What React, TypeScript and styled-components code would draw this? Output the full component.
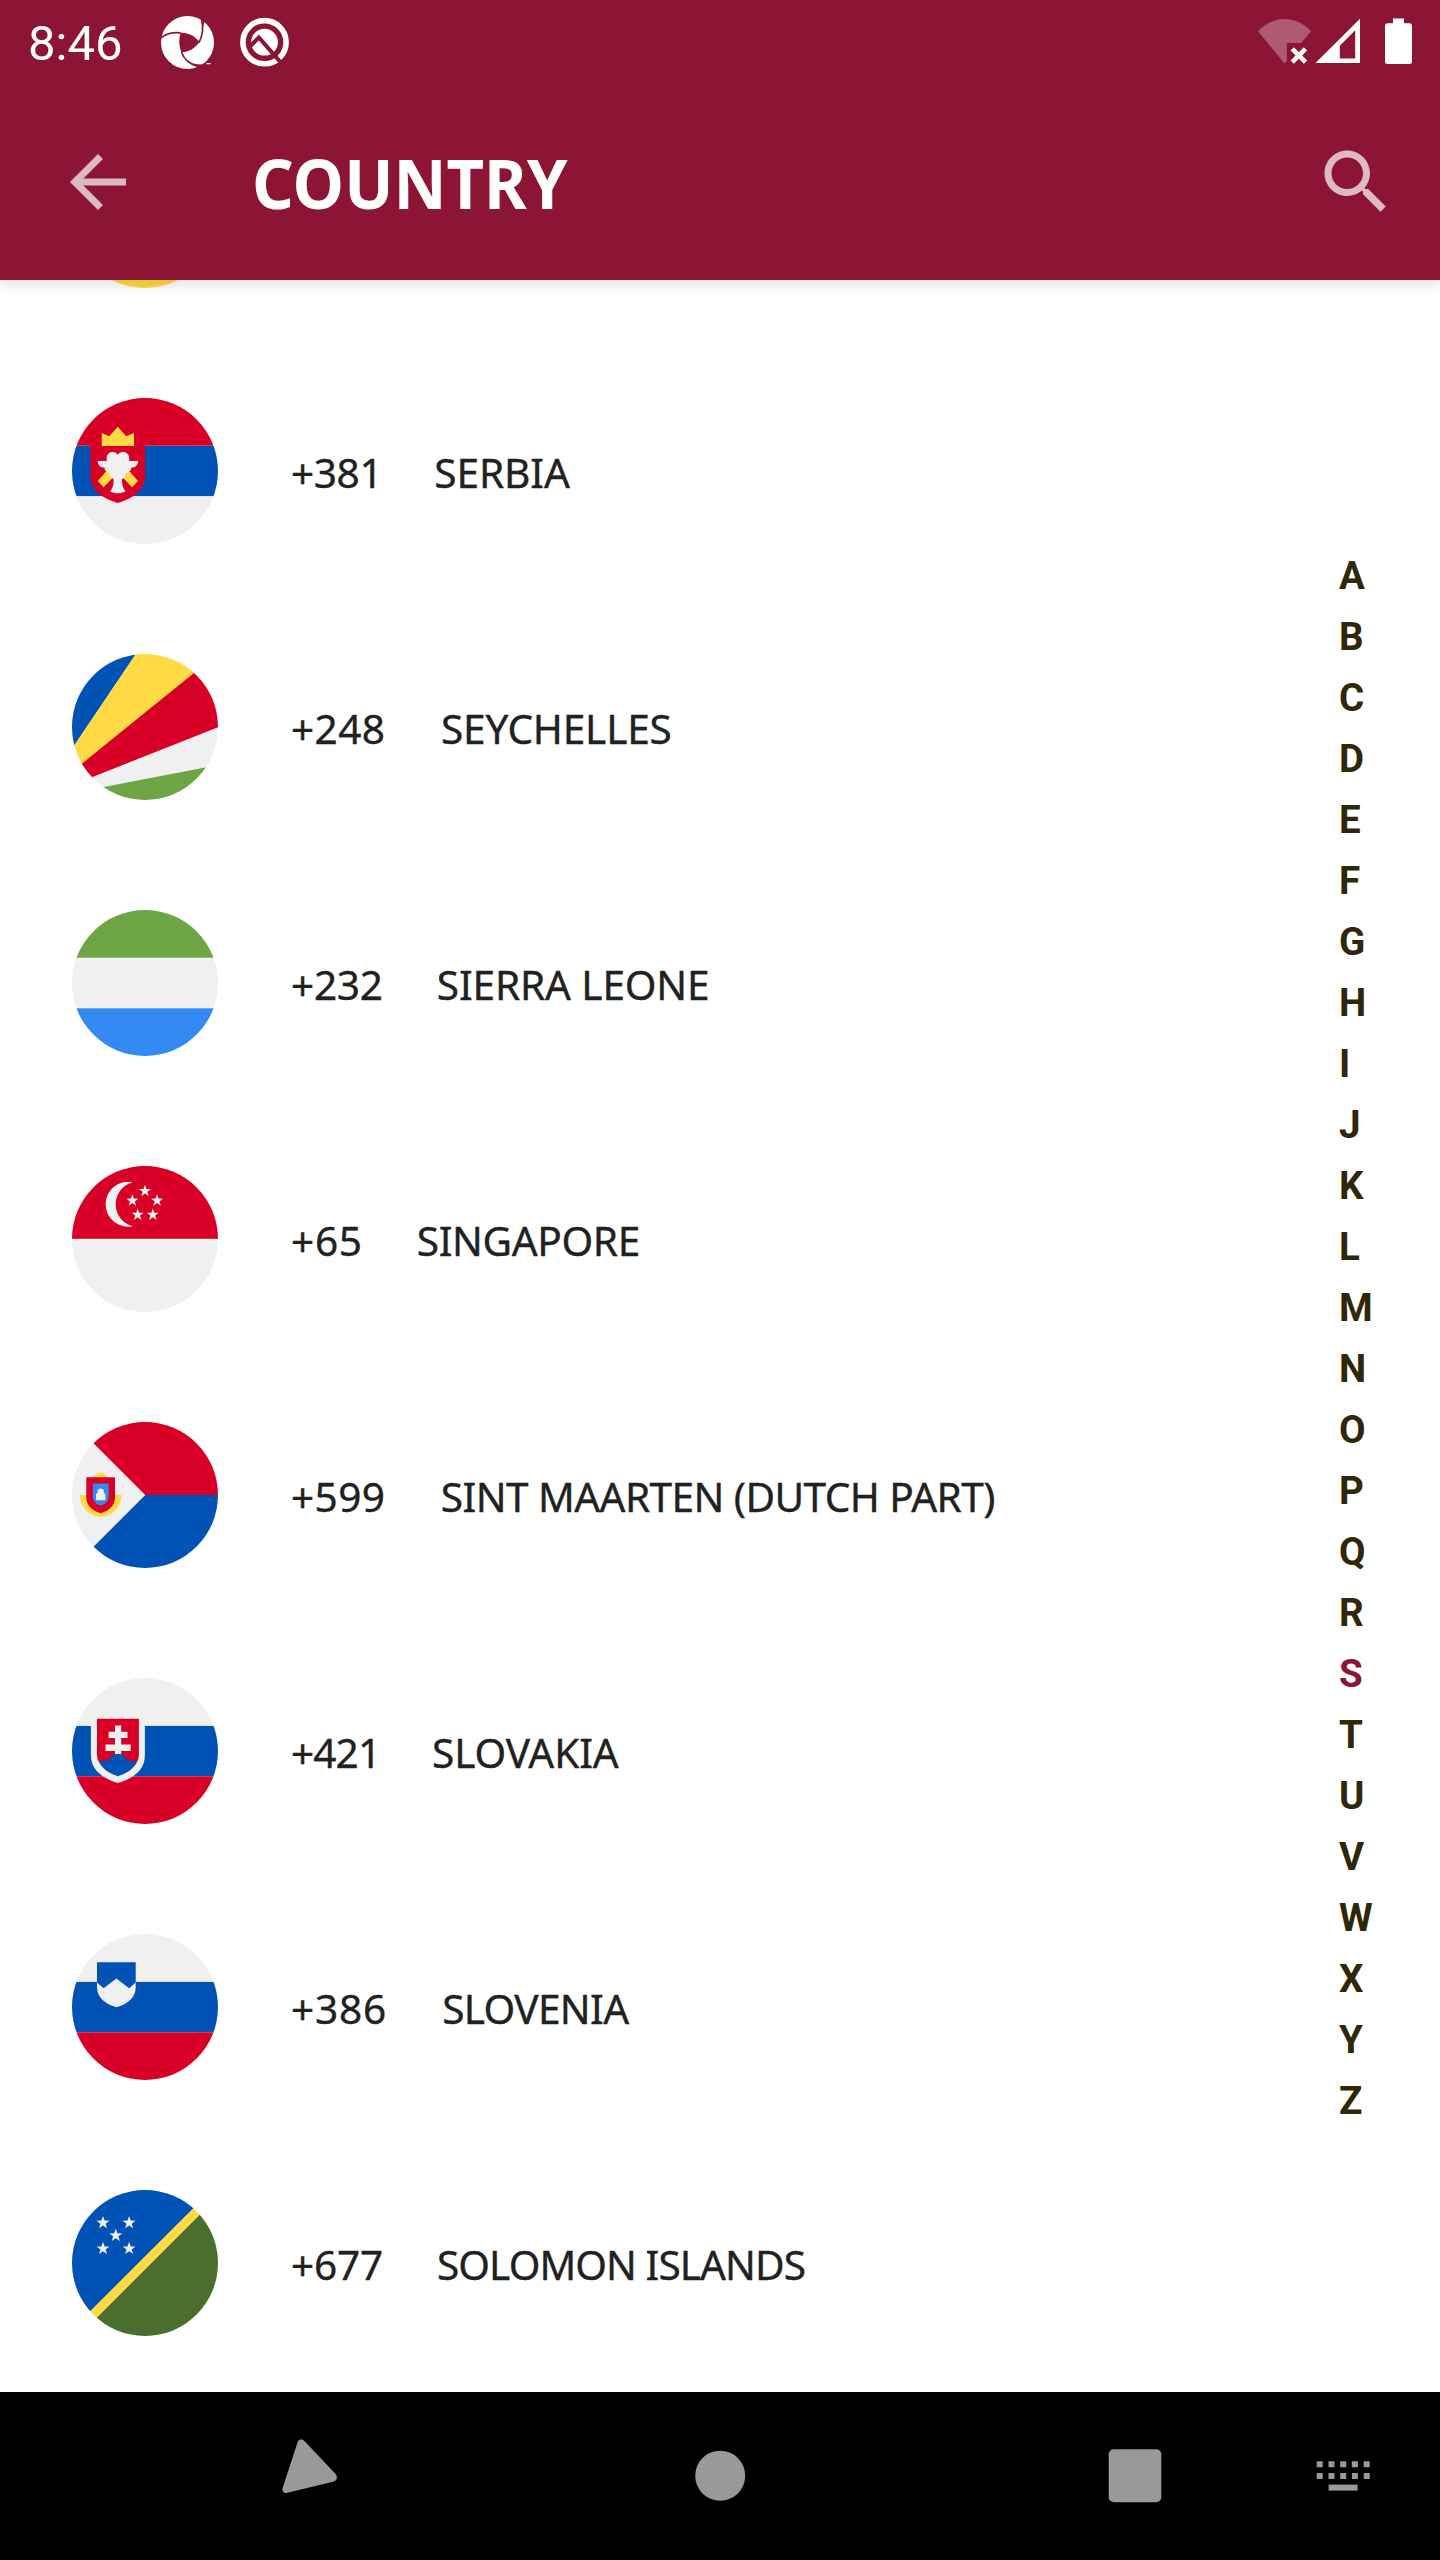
import React from "react";
import styled, { createGlobalStyle } from "styled-components";

const MAROON = "#8c1535";
const RED = "#d80027";
const BLUE = "#0052b4";
const WHITE = "#f0f0f0";
const YELLOW = "#ffda44";
const GREEN = "#6da544";

const GlobalStyle = createGlobalStyle`
  * { box-sizing: border-box; }
  body { margin: 0; background: #fff; }
`;

const Screen = styled.div`
  display: flex;
  flex-direction: column;
  width: 1440px;
  height: 2560px;
  overflow: hidden;
  background: #fff;
  font-family: "Noto Sans", "Open Sans", sans-serif;
`;

const Header = styled.header`
  position: relative;
  z-index: 2;
  flex: none;
  display: flex;
  flex-direction: column;
  height: 280px;
  background: ${MAROON};
  box-shadow: 0 4px 14px rgba(0, 0, 0, 0.14);
`;

const StatusBar = styled.div`
  display: flex;
  align-items: center;
  justify-content: space-between;
  height: 84px;
  padding: 0 28px 0 28px;
`;

const StatusGroup = styled.div`
  display: flex;
  align-items: center;
`;

const Clock = styled.span`
  width: 133px;
  padding-top: 4px;
  font: 400 49px/56px Roboto, sans-serif;
  color: #fff;
`;

const Toolbar = styled.div`
  flex: 1;
  display: flex;
  align-items: center;
  padding: 0 42px 0 56px;
`;

const IconButton = styled.button`
  display: flex;
  width: 84px;
  height: 84px;
  padding: 0;
  border: 0;
  background: none;
  color: rgba(255, 255, 255, 0.7);
`;

const Title = styled.h1`
  flex: 1;
  margin: 0;
  padding-left: 112px;
  font-size: 69px;
  line-height: 96px;
  font-weight: 700;
  color: #fff;

  span {
    display: inline-block;
    transform: scaleX(0.945);
    transform-origin: 0 50%;
  }
`;

const Main = styled.main`
  flex: 1;
  min-height: 0;
  display: flex;
  justify-content: space-between;
  overflow: hidden;
`;

const CountryList = styled.ul`
  flex: 1;
  margin: -193px 0 0;
  padding: 0;
  list-style: none;
`;

const CountryRow = styled.li`
  display: flex;
  align-items: center;
  height: 256px;
  padding-left: 72px;
  font-size: 40.6px;
  line-height: 56px;
  color: #212121;
  -webkit-text-stroke: 0.35px #212121;
  white-space: nowrap;
`;

const Flag = styled.svg`
  flex: none;
  width: 146px;
  height: 146px;
  margin-right: 73px;
  border-radius: 50%;
`;

const Code = styled.span<{ $width: number; $spacing: number }>`
  flex: none;
  width: ${(p) => p.$width - 1}px;
  padding-top: 3px;
  letter-spacing: ${(p) => p.$spacing}px;
`;

const Name = styled.span<{ $spacing: number }>`
  padding-top: 3px;
  letter-spacing: ${(p) => p.$spacing}px;
`;

const AlphabetIndex = styled.nav`
  flex: none;
  display: flex;
  flex-direction: column;
  width: 101px;
  padding-top: 265px;
`;

const Letter = styled.span<{ $active: boolean }>`
  height: 61px;
  font: 700 38.5px/61px Roboto, sans-serif;
  color: ${(p) => (p.$active ? MAROON : "#302608")};
`;

const NavBar = styled.footer`
  flex: none;
  display: grid;
  grid-template-columns: 282px 413px 413px 208px 1fr;
  height: 168px;
  background: #000;
  color: #999;

  svg { display: block; fill: currentColor; }
`;

const NavItem = styled.div<{ $top: number }>`
  padding-top: ${(p) => p.$top}px;
`;

const star = (cx: number, cy: number, r: number) =>
  Array.from({ length: 10 }, (_, i) => {
    const a = -Math.PI / 2 + (i * Math.PI) / 5;
    const d = i % 2 ? r * 0.4 : r;
    return `${(cx + d * Math.cos(a)).toFixed(2)},${(cy + d * Math.sin(a)).toFixed(2)}`;
  }).join(" ");

const Stars = ({ at, r }: { at: [number, number][]; r: number }) => (
  <g fill={WHITE}>
    {at.map(([x, y]) => (
      <polygon key={`${x}-${y}`} points={star(x, y, r)} />
    ))}
  </g>
);

const Stripes = ({ colors }: { colors: string[] }) => (
  <>
    <rect y="47.7" width="146" height="50.6" fill={colors[1]} />
    <rect width="146" height="47.7" fill={colors[0]} />
    <rect y="98.3" width="146" height="47.7" fill={colors[2]} />
  </>
);

const flags: Record<string, React.ReactNode> = {
  previous: <rect width="146" height="146" fill={YELLOW} />,
  serbia: (
    <>
      <Stripes colors={[RED, BLUE, WHITE]} />
      <path fill={RED} d="M18.4 40H73.1V77C73.1 92 62 100 45.8 105C29.5 100 18.4 92 18.4 77Z" />
      <path fill={YELLOW} d="M29.8 48V35L37.2 38.2L45.8 28.7L54.3 38.2L62 35V48Z" />
      <path fill={YELLOW} d="M33.5 74L25.8 83L31.5 89.3L45.8 74.5L60.1 89.3L66 83L58.2 74Z" />
      <path
        fill={WHITE}
        d="M45.8 56.8C43.8 53 36 52.5 34.7 58.8V63H25.6C26 67.5 28.5 69.6 32.4 69.6C32.6 73.2 35 74.8 38 75.3C38 78 39 80.3 41.6 81C42 86.5 40.5 90.5 38.2 93.3C42.5 96 49.2 96 53.6 93.3C51 90.5 49.7 86.5 50 81C52.6 80.3 53.7 78 53.7 75.3C56.7 74.8 59 73.2 59.3 69.6C63.2 69.6 65.7 67.5 66.3 63H57.2V58.8C55.8 52.5 47.8 53 45.8 56.8Z"
      />
    </>
  ),
  seychelles: (
    <>
      <path fill={RED} d="M146 0H144L-10 125.6V133H0L146 74Z" />
      <path fill={BLUE} d="M0 95V0H63.9L2.5 91Z" />
      <path fill={YELLOW} d="M63.9 0H144L121.7 19.3L10.2 109.3L-10 125.6V109.5Z" />
      <path fill={WHITE} d="M146 73.2L20.4 123L-4 132.7V141L33.1 133L146 111.4Z" />
      <path fill={GREEN} d="M146 111.1L33.1 132.7L0 139V146H146Z" />
    </>
  ),
  sierraLeone: <Stripes colors={[GREEN, WHITE, "#338af3"]} />,
  singapore: (
    <>
      <rect y="72.8" width="146" height="73.2" fill={WHITE} />
      <rect width="146" height="72.8" fill={RED} />
      <path fill={WHITE} d="M60.8 16.2A22.5 22.5 0 1 0 60.8 60.2A22.7 22.7 0 0 1 60.8 16.2Z" />
      <Stars r={6.3} at={[[73, 25], [60.4, 34.6], [85.1, 34.6], [65.6, 48.8], [80.8, 48.8]]} />
    </>
  ),
  sintMaarten: (
    <>
      <path fill={RED} d="M0 0H146V73H73Z" />
      <path fill={BLUE} d="M0 146H146V73H73Z" />
      <path fill={WHITE} d="M0 0L73 73L0 146Z" />
      <path fill={YELLOW} d="M8 73A20.8 22 0 0 0 49.6 73H42V56H35Q33 50.7 28.7 50.7T22 56H15V73Z" />
      <path fill={RED} d="M14.3 55.2H43V75C43 83 38 88.5 28.7 91.2C19.5 88.5 14.3 83 14.3 75Z" />
      <path fill="#338af3" d="M20.9 61.5H36.6V74.5C36.6 79 33.5 82.2 28.7 83.6C24 82.2 20.9 79 20.9 74.5Z" />
      <path fill={WHITE} d="M24 78.2V71.6H25.6V67.5H27A2 2 0 0 1 30.5 67.5H31.8V71.6H33.4V78.2Z" />
    </>
  ),
  slovakia: (
    <>
      <Stripes colors={[WHITE, BLUE, RED]} />
      <path fill={WHITE} d="M18.9 40H72.9V77C72.9 92 62 100 45.9 105C30 100 18.9 92 18.9 77Z" />
      <path fill={RED} d="M25 40.7H66.9V77Q66.9 81 65 84H27Q25 81 25 77Z" />
      <path fill={WHITE} d="M43 80V73H33.5V66.6H43V60H36.6V53.8H43V47.6H49.2V53.8H55.5V60H49.2V66.6H58.7V73H49.2V80Z" />
      <path fill={BLUE} d="M27 84C29.5 82.7 33.5 82 36.4 83.2C37.5 78.6 41 76 45.9 76S54.3 78.6 55.5 83.2C58.5 82 62.5 82.7 65 84C61.5 91 55 95.5 45.9 98.2C37 95.5 30.5 91 27 84Z" />
    </>
  ),
  slovenia: (
    <>
      <Stripes colors={[WHITE, BLUE, RED]} />
      <path fill={WHITE} d="M25 46H63.7V53C63.7 63 57 69.5 44.4 73.2C32 69.5 25 63 25 53Z" />
      <path fill={BLUE} d="M25 28.3H63.7V48.6L57.2 54.3L44.4 44.6L31.6 54.3L25 48.6Z" />
    </>
  ),
  solomon: (
    <>
      <path fill={BLUE} d="M0 0H140L0 140Z" />
      <path fill="#496e2d" d="M146 6V146H6Z" />
      <path fill={YELLOW} d="M139.6 0H146V6.5L6.5 146H0V139.3Z" />
      <Stars r={6.8} at={[[31, 32.8], [57.1, 32.8], [43.8, 45.5], [31, 58.6], [57.1, 58.6]]} />
    </>
  ),
};

interface Country {
  flag: string;
  code: string;
  name: string;
  codeWidth: number;
  codeSpacing?: number;
  nameSpacing?: number;
}

const countries: Country[] = [
  { flag: "serbia", code: "+381", name: "SERBIA", codeWidth: 144.3, codeSpacing: -0.4, nameSpacing: -0.1 },
  { flag: "seychelles", code: "+248", name: "SEYCHELLES", codeWidth: 151, codeSpacing: 0.4, nameSpacing: -0.2 },
  { flag: "sierraLeone", code: "+232", name: "SIERRA LEONE", codeWidth: 146.8, codeSpacing: -0.3, nameSpacing: -0.15 },
  { flag: "singapore", code: "+65", name: "SINGAPORE", codeWidth: 126.8, codeSpacing: 0.7, nameSpacing: -0.36 },
  { flag: "sintMaarten", code: "+599", name: "SINT MAARTEN (DUTCH PART)", codeWidth: 150.8, codeSpacing: 0.4, nameSpacing: -0.57 },
  { flag: "slovakia", code: "+421", name: "SLOVAKIA", codeWidth: 142, codeSpacing: -0.9, nameSpacing: -0.1 },
  { flag: "slovenia", code: "+386", name: "SLOVENIA", codeWidth: 152.2, codeSpacing: 0.8, nameSpacing: -0.65 },
  { flag: "solomon", code: "+677", name: "SOLOMON ISLANDS", codeWidth: 147, codeSpacing: -0.2, nameSpacing: -0.93 },
];

const letters = "ABCDEFGHIJKLMNOPQRSTUVWXYZ".split("");

const ShutterIcon = () => (
  <svg width="54" height="54" viewBox="0 0 54 54">
    <circle cx="26.5" cy="26.5" r="26.5" fill="#fff" />
    <path fill={MAROON} d="M19.5 16.7C27 16.3 34 20 38.5 26C34 32.5 28 36 20.3 36.3C17.8 30 17.6 23 19.5 16.7Z" />
    <g fill="none" stroke={MAROON} strokeWidth="1.7">
      <path d="M-1 22.5C5 17.5 12 16 20 17" />
      <path d="M38 26.5C41.6 20 42.6 11 40.4 1.5" />
      <path d="M20.5 36C22.5 42.5 28 48 37.5 50.8" />
    </g>
    <path fill={MAROON} d="M40 1L41.7 14L43.3 5.6L47 7V0Z" />
    <path fill={MAROON} d="M27 45L36 50.6L34.5 54H45L43 47.5L40 48.6C35 48.6 30 47.2 27 45Z" />
    <path stroke="#fff" strokeWidth="1.3" d="M45.5 47.6H49.5" />
  </svg>
);

const QIcon = () => (
  <svg width="50" height="51" viewBox="0 0 50 51">
    <circle cx="24.5" cy="25.2" r="21.6" fill="none" stroke="#fff" strokeWidth="5.6" />
    <circle cx="24.5" cy="25.2" r="13.4" fill="#fff" />
    <path fill="none" stroke={MAROON} strokeWidth="4" d="M9 30.5L18.8 20.5L43 48" />
    <path fill="none" stroke={MAROON} strokeWidth="2.6" d="M24 26L44 49" />
  </svg>
);

const WifiOffIcon = () => (
  <svg width="57" height="50" viewBox="0 0 57 50">
    <path fill="#fff" fillOpacity="0.3" d="M0 13.2C15.5-3 37.5-3 53 13.2L43 25H28.8V43L26.5 45.5Z" />
    <path stroke="#fff" strokeWidth="4.6" d="M34.2 30.8L47.5 44.1M47.5 30.8L34.2 44.1" />
  </svg>
);

const SignalIcon = () => (
  <svg width="45" height="50" viewBox="0 0 45 50">
    <path fill="#fff" fillRule="evenodd" d="M45 .8V45H.5ZM40.2 12.2L24.8 27.7V40.6H40.2Z" />
  </svg>
);

const BatteryIcon = () => (
  <svg width="27" height="50" viewBox="0 0 27 50">
    <path fill="#fff" d="M8 .5H19V5.2H24.5Q27 5.2 27 7.7V43.5Q27 46 24.5 46H2.5Q0 46 0 43.5V7.7Q0 5.2 2.5 5.2H8Z" />
  </svg>
);

const StatusIcon = styled.span<{ $gap: number; $drop?: number }>`
  display: flex;
  margin-right: ${(p) => p.$gap}px;
  padding-top: ${(p) => p.$drop ?? 0}px;
`;

export default function App() {
  return (
    <Screen>
      <GlobalStyle />
      <Header>
        <StatusBar>
          <StatusGroup>
            <Clock>8:46</Clock>
            <StatusIcon $gap={25} $drop={2}><ShutterIcon /></StatusIcon>
            <StatusIcon $gap={0}><QIcon /></StatusIcon>
          </StatusGroup>
          <StatusGroup>
            <StatusIcon $gap={0} $drop={2}><WifiOffIcon /></StatusIcon>
            <StatusIcon $gap={25} $drop={2}><SignalIcon /></StatusIcon>
            <StatusIcon $gap={0} $drop={2}><BatteryIcon /></StatusIcon>
          </StatusGroup>
        </StatusBar>
        <Toolbar>
          <IconButton aria-label="Back">
            <svg width="84" height="84" viewBox="0 0 24 24" fill="currentColor">
              <path d="M20 11H7.83l5.59-5.59L12 4l-8 8 8 8 1.41-1.41L7.83 13H20v-2z" />
            </svg>
          </IconButton>
          <Title><span>COUNTRY</span></Title>
          <IconButton aria-label="Search">
            <svg width="84" height="84" viewBox="0 0 24 24" fill="currentColor">
              <path d="M15.5 14h-.79l-.28-.27C15.41 12.59 16 11.11 16 9.5 16 5.91 13.09 3 9.5 3S3 5.91 3 9.5 5.91 16 9.5 16c1.61 0 3.09-.59 4.23-1.57l.27.28v.79l5 4.99L20.49 19l-4.99-5zm-6 0C7.01 14 5 11.99 5 9.5S7.01 5 9.5 5 14 7.01 14 9.5 11.99 14 9.5 14z" />
            </svg>
          </IconButton>
        </Toolbar>
      </Header>
      <Main>
        <CountryList>
          <CountryRow>
            <Flag viewBox="0 0 146 146">{flags.previous}</Flag>
          </CountryRow>
          {countries.map((c) => (
            <CountryRow key={c.name}>
              <Flag viewBox="0 0 146 146">{flags[c.flag]}</Flag>
              <Code $width={c.codeWidth} $spacing={c.codeSpacing ?? 0}>{c.code}</Code>
              <Name $spacing={c.nameSpacing ?? 0}>{c.name}</Name>
            </CountryRow>
          ))}
        </CountryList>
        <AlphabetIndex>
          {letters.map((l) => (
            <Letter key={l} $active={l === "S"}>{l}</Letter>
          ))}
        </AlphabetIndex>
      </Main>
      <NavBar>
        <div />
        <NavItem $top={46}>
          <svg width="57" height="58" viewBox="0 0 57 58">
            <path d="M16 3Q19-.5 22.5 3L54 36.5Q56.5 41.5 52 43.5L4.5 55Q.5 55.5 .3 51Z" />
          </svg>
        </NavItem>
        <NavItem $top={58}>
          <svg width="51" height="51"><circle cx="25.2" cy="25.7" r="25" /></svg>
        </NavItem>
        <NavItem $top={57}>
          <svg width="54" height="54"><rect x=".7" y=".3" width="52.6" height="53" rx="5" /></svg>
        </NavItem>
        <NavItem $top={69}>
          <svg width="56" height="32" viewBox="0 0 56 32">
            {[0, 11.8, 23.5, 35.2, 47].map((x) => (
              <path key={x} d={`M${x + 0.7} .3h6v6h-6zM${x + 0.7} 12h6v6h-6z`} />
            ))}
            <rect x="12.6" y="23.6" width="29" height="6" />
          </svg>
        </NavItem>
      </NavBar>
    </Screen>
  );
}
